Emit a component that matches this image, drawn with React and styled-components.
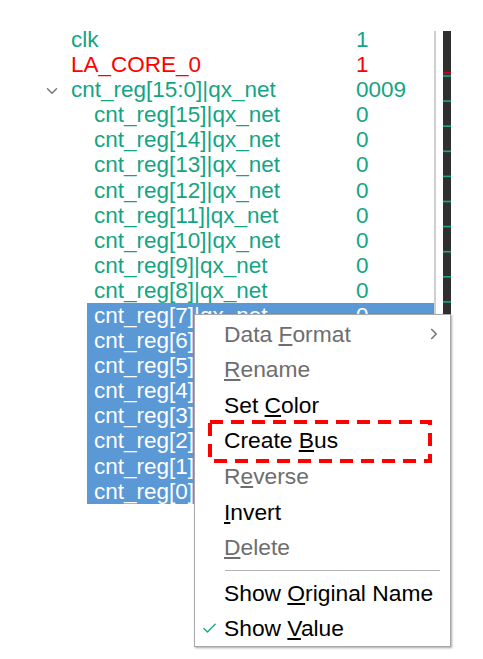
import React from "react";
import styled, { createGlobalStyle } from "styled-components";
import { ChevronDown, ChevronRight, Check } from "lucide-react";

const GlobalStyle = createGlobalStyle`
  html, body {
    margin: 0;
    padding: 0;
    background: #ffffff;
  }
  body {
    font-family: "Liberation Sans", Arial, sans-serif;
  }
`;

const ROW_H = 25.1;
const TOP = 27.4;

const Page = styled.div`
  position: relative;
  width: 483px;
  height: 659px;
  overflow: hidden;
  display: flex;
  align-items: flex-start;
`;

const Tree = styled.div`
  width: 434px;
  padding-top: ${TOP}px;
  display: flex;
  flex-direction: column;
`;

const Row = styled.div`
  height: ${ROW_H}px;
  display: flex;
  padding-left: ${(p) => (p.$depth ? 87 : 40)}px;
  font-size: 22.5px;
  color: ${(p) => (p.$selected ? "#ffffff" : p.$color)};
`;

const Toggle = styled.div`
  width: 24px;
  display: flex;
  align-items: center;
  justify-content: center;
  padding-top: 1px;
  color: #777777;
`;

const Body = styled.div`
  flex: 1;
  display: flex;
  align-items: center;
  padding: 0 0 0 7px;
  background: ${(p) => (p.$selected ? "#5b98d6" : "transparent")};
`;

const Name = styled.span`
  flex: 0 0 ${(p) => (p.$depth ? 262 : 285)}px;
  white-space: nowrap;
  overflow: hidden;
`;

const Value = styled.span`
  white-space: nowrap;
`;

const Divider = styled.div`
  width: 1.5px;
  height: 614px;
  margin-top: 31px;
  background: #cfcfcf;
`;

const Strip = styled.svg`
  display: block;
  margin-left: 7.5px;
  margin-top: 31px;
`;

const Menu = styled.div`
  position: absolute;
  left: 194px;
  top: 314px;
  width: 255px;
  padding-top: 1px;
  background: #ffffff;
  border: 1px solid #a8a8a8;
  box-shadow: 1px 1px 2px rgba(0, 0, 0, 0.35);
  font-size: 22.8px;
`;

const Item = styled.div`
  height: 35.6px;
  display: flex;
  align-items: center;
  padding-top: 0.5px;
  box-sizing: border-box;
  color: ${(p) => (p.$disabled ? "#6e6e6e" : "#000000")};
`;

const CheckSlot = styled.span`
  flex: 0 0 29px;
  display: flex;
  justify-content: center;
  color: #1aa886;
`;

const Label = styled.span`
  flex: 1;
  white-space: nowrap;
  u {
    text-underline-offset: 2px;
  }
`;

const Arrow = styled.span`
  display: flex;
  margin-right: 7px;
  color: #777777;
`;

const Separator = styled.div`
  height: 10px;
  display: flex;
  align-items: center;
  padding-left: 30px;
  padding-right: 10px;
  &::after {
    content: "";
    flex: 1;
    height: 1px;
    background: #b4b4b4;
  }
`;

const Highlight = styled.svg`
  position: absolute;
  left: 208px;
  top: 420px;
`;

const GREEN = "#13a583";
const RED = "#ff0000";

const bits = Array.from({ length: 16 }, (_, i) => 15 - i);

const rows = [
  { name: "clk", value: "1", color: GREEN },
  { name: "LA_CORE_0", value: "1", color: RED },
  { name: "cnt_reg[15:0]|qx_net", value: "0009", color: GREEN, open: true },
  ...bits.map((b) => ({
    name: `cnt_reg[${b}]|qx_net`,
    value: "0",
    color: GREEN,
    depth: 1,
    selected: b <= 7,
  })),
];

const menu = [
  { label: "Data Format", key: 5, disabled: true, sub: true },
  { label: "Rename", key: 0, disabled: true },
  { label: "Set Color", key: 4 },
  { label: "Create Bus", key: 7 },
  { label: "Reverse", key: 1, disabled: true },
  { label: "Invert", key: 0 },
  { label: "Delete", key: 0, disabled: true },
  { sep: true },
  { label: "Show Original Name", key: 5 },
  { label: "Show Value", key: 5, checked: true },
];

const Mnemonic = ({ text, at }) => (
  <>
    {text.slice(0, at)}
    <u>{text[at]}</u>
    {text.slice(at + 1)}
  </>
);

const Wave = () => {
  const ticks = [];
  for (let i = 1; i < rows.length; i++) {
    const y = TOP + (i + 1) * ROW_H - 31 - 2.4;
    ticks.push(<rect key={i} x="0" y={y} width="8" height="1.6" fill="#1aa886" />);
  }
  return (
    <Strip width="8" height="614" viewBox="0 0 8 614">
      <rect x="0" y="0" width="8" height="614" fill="#2f2f2f" />
      <rect x="0" y={TOP + 2 * ROW_H - 31 - 5.4} width="8" height="1.6" fill="#e00000" />
      {ticks}
    </Strip>
  );
};

export default function App() {
  return (
    <>
      <GlobalStyle />
      <Page>
        <Tree>
          {rows.map((r) => (
            <Row key={r.name} $depth={r.depth} $color={r.color} $selected={r.selected}>
              {!r.depth && (
                <Toggle>{r.open && <ChevronDown size={18} strokeWidth={2} />}</Toggle>
              )}
              <Body $selected={r.selected}>
                <Name $depth={r.depth}>{r.name}</Name>
                <Value>{r.value}</Value>
              </Body>
            </Row>
          ))}
        </Tree>
        <Divider />
        <Wave />

        <Menu>
          {menu.map((m, i) =>
            m.sep ? (
              <Separator key={i} />
            ) : (
              <Item key={m.label} $disabled={m.disabled}>
                <CheckSlot>{m.checked && <Check size={17} strokeWidth={2} />}</CheckSlot>
                <Label>
                  <Mnemonic text={m.label} at={m.key} />
                </Label>
                {m.sub && (
                  <Arrow>
                    <ChevronRight size={18} strokeWidth={2.2} />
                  </Arrow>
                )}
              </Item>
            )
          )}
        </Menu>

        <Highlight width="224" height="43" viewBox="0 0 224 43">
          <rect
            x="2"
            y="2"
            width="220"
            height="39"
            fill="none"
            stroke="#ff0000"
            strokeWidth="4"
            strokeDasharray="13 8"
          />
        </Highlight>
      </Page>
    </>
  );
}
